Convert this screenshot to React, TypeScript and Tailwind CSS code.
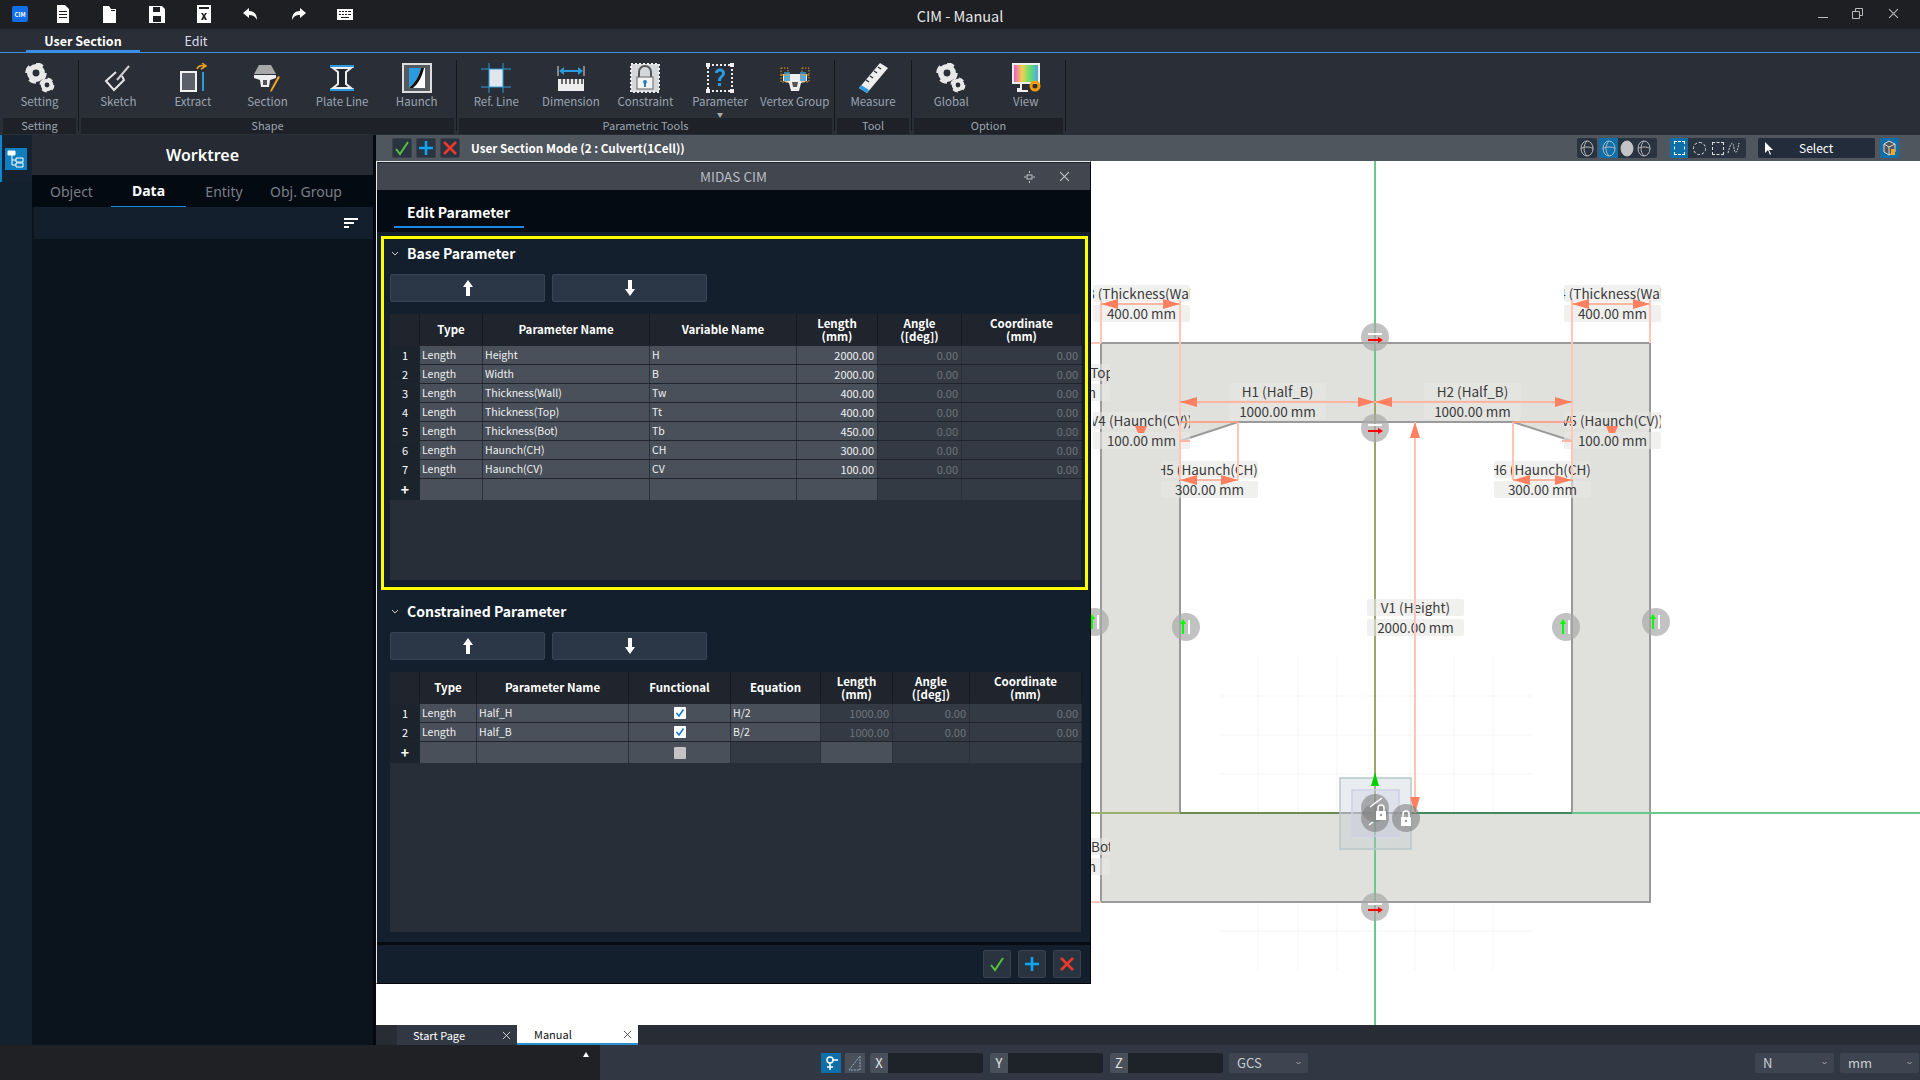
import type { ReactNode } from 'react';

const Gear = ({ cx, cy, r }: { cx: number; cy: number; r: number }) => (
  <g fill="none" stroke="#e8e8e8">
    <circle cx={cx} cy={cy} r={r * 0.62} strokeWidth={r * 0.55} />
    <circle cx={cx} cy={cy} r={r * 0.92} strokeWidth={r * 0.3} strokeDasharray={`${r * 0.72} ${r * 0.72}`} />
  </g>
);

const Svg = ({ children, s = 30 }: { children: ReactNode; s?: number }) => (
  <svg width={s} height={s} viewBox="0 0 30 30">
    {children}
  </svg>
);

const XMark = ({ s, c }: { s: number; c: string }) => (
  <svg width={s} height={s} viewBox="0 0 10 10" fill="none" stroke={c}>
    <path d="M1 1l8 8M9 1 1 9" />
  </svg>
);

const SettingIcon = () => (
  <Svg>
    <Gear cx={11} cy={10} r={10} />
    <Gear cx={22} cy={22} r={7} />
  </Svg>
);
const SketchIcon = () => (
  <Svg>
    <path d="M13 9 3 18l8 9 10-10-2-4" fill="none" stroke="#e8e8e8" strokeWidth="2" />
    <path d="M14 17 26 3" stroke="#d0d0d0" strokeWidth="2" />
  </Svg>
);
const ExtractIcon = () => (
  <Svg>
    <rect x="3" y="9" width="15" height="19" fill="#5b6068" stroke="#f2f2f2" strokeWidth="2" />
    <path d="M25 9v19" stroke="#2b9be0" strokeWidth="2" />
    <path d="M19 6c1-3 4-4 7-3M24 0l4 3-5 3" fill="none" stroke="#f5a623" strokeWidth="1.5" />
  </Svg>
);
const SectionIcon = () => (
  <Svg>
    <path d="M7 2h12l5 9H2z" fill="#a8a8a8" />
    <path d="M2 12h22v3l-6 2-1 7H9l-1-7-6-2z" fill="#eee" />
    <path d="M11 17h4v5h-4z" fill="#555" />
    <path d="m28 14-8 14-2 1 1-3 7-13z" fill="#f5a623" />
  </Svg>
);
const PlateIcon = () => (
  <Svg>
    <path d="M3 2h24v3H3zM3 25h24v3H3z" fill="#2b9be0" />
    <path d="M6 5h18l-5 4v12l5 4H6l5-4V9z" fill="#20252c" stroke="#eee" strokeWidth="2" />
  </Svg>
);
const HaunchIcon = () => (
  <Svg>
    <rect x="1" y="1" width="28" height="28" fill="#555a61" stroke="#ddd" strokeWidth="2" />
    <path d="M7 5h16v20H7z" fill="#fff" />
    <path d="M7 5h12C17 14 12 21 7 25z" fill="#2b9be0" />
    <path d="M19 5C17 14 12 21 7 25h4c5-4 9-11 11-20z" fill="#111" />
  </Svg>
);
const RefLineIcon = () => (
  <Svg>
    <path d="M8 6h14v18H8z" fill="#dfe7ea" />
    <path d="M8 0v30M22 0v30M0 6h30M0 24h30" stroke="#2b9be0" strokeWidth="1" />
  </Svg>
);
const DimensionIcon = () => (
  <Svg>
    <path d="M2 16h26v12H2z" fill="#eee" />
    <path d="M6 16v5M10 16v5M14 16v5M18 16v5M22 16v5M26 16v5" stroke="#222" strokeWidth="1.3" />
    <path d="M2 3v10M28 3v10" stroke="#ddd" />
    <path d="M4 8h22" stroke="#2b9be0" strokeWidth="2" />
    <path d="m3 8 5-4v8zM27 8l-5-4v8z" fill="#2b9be0" />
  </Svg>
);
const ConstraintIcon = () => (
  <Svg>
    <rect x="1" y="1" width="28" height="28" fill="#d5d8da" stroke="#eee" strokeDasharray="2 2" strokeWidth="2" />
    <path d="M9 14V9a6 6 0 0 1 12 0v5" fill="none" stroke="#555" strokeWidth="2" />
    <rect x="7" y="14" width="16" height="12" fill="#f3f3f3" stroke="#666" />
    <circle cx="15" cy="19" r="2" fill="#2b7fb5" />
    <path d="M14 19h2v5h-2z" fill="#2b7fb5" />
  </Svg>
);
const ParameterIcon = () => (
  <Svg>
    <rect x="3" y="2" width="24" height="26" fill="none" stroke="#eee" strokeWidth="2" strokeDasharray="2 2" />
    <path d="M1 0h4v4H1zM25 0h4v4h-4zM1 26h4v4H1zM25 26h4v4h-4z" fill="#eee" />
    <path d="M10 10c0-6 10-6 10 0 0 4-4 4-4 8h-3c0-5 4-5 4-8 0-2-4-2-4 0z" fill="#2b9be0" />
    <path d="M13 20h3v3h-3z" fill="#2b9be0" />
  </Svg>
);
const VertexIcon = () => (
  <Svg>
    <path d="M3 11h24v7l-6 2-2 8h-8l-2-8-6-2z" fill="#eee" />
    <path d="M12 19h6l-1 5h-4z" fill="#555" />
    <path d="M4 9h6v9H4zM20 9h6v9h-6z" fill="#2b9be0" opacity=".8" />
    <path d="M1 5h7v7H1zM22 5h7v7h-7zM1 12h7v7H1zM22 12h7v7h-7z" fill="none" stroke="#e89b20" strokeDasharray="1.5 1.5" />
  </Svg>
);
const MeasureIcon = () => (
  <Svg>
    <path d="M22 0 30 5 9 30 1 25z" fill="#eee" />
    <path d="M1 25 9 30 11 27 3 22z" fill="#2b9be0" />
    <path d="M8 17l3 2M12 13l3 2M16 8l3 2M20 4l3 2" stroke="#333" strokeWidth="1.5" />
  </Svg>
);
const ViewIcon = () => (
  <Svg>
    <defs>
      <linearGradient id="rb" x1="0" x2="1">
        <stop offset="0" stopColor="#f050d0" />
        <stop offset=".35" stopColor="#f0d050" />
        <stop offset=".65" stopColor="#60e070" />
        <stop offset="1" stopColor="#50a0f0" />
      </linearGradient>
    </defs>
    <rect x="2" y="1" width="26" height="19" fill="url(#rb)" stroke="#eee" strokeWidth="2" />
    <path d="M10 21v5H7v2h10" stroke="#eee" fill="none" strokeWidth="2" />
    <circle cx="24" cy="23" r="4" fill="none" stroke="#f59a00" strokeWidth="3" />
  </Svg>
);

const ribbon = [
  { label: 'Setting', w: 'w-[73px]', items: [['Setting', SettingIcon]] },
  {
    label: 'Shape',
    w: 'w-[373px]',
    items: [
      ['Sketch', SketchIcon],
      ['Extract', ExtractIcon],
      ['Section', SectionIcon],
      ['Plate Line', PlateIcon],
      ['Haunch', HaunchIcon],
    ],
  },
  {
    label: 'Parametric Tools',
    w: 'w-[373px]',
    items: [
      ['Ref. Line', RefLineIcon],
      ['Dimension', DimensionIcon],
      ['Constraint', ConstraintIcon],
      ['Parameter', ParameterIcon],
      ['Vertex Group', VertexIcon],
    ],
  },
  { label: 'Tool', w: 'w-[72px]', items: [['Measure', MeasureIcon]] },
  {
    label: 'Option',
    w: 'w-[149px]',
    items: [
      ['Global', SettingIcon],
      ['View', ViewIcon],
    ],
  },
] as { label: string; w: string; items: [string, () => ReactNode][] }[];

const TitleIcon = ({ d, cx }: { d: ReactNode; cx: string }) => (
  <div className={`absolute top-[5px] ${cx}`}>
    <svg width="18" height="18" viewBox="0 0 18 18" fill="#fff">
      {d}
    </svg>
  </div>
);

const TitleBar = () => (
  <div className="relative flex h-[29px] shrink-0 items-center justify-center bg-[#1d1f23] pt-[2px] text-[14.5px] text-[#e8e8e8]">
    <div className="absolute left-[12px] top-[6px] flex h-[16px] w-[16px] items-center justify-center rounded-[2px] bg-[#0f6ee8] text-[6px] font-bold text-white">
      CIM
    </div>
    <TitleIcon cx="left-[54px]" d={<path d="M3 0h8l4 4v14H3zM5 6v1h8V6zm0 3v1h8V9zm0 3v1h8v-1z" fillRule="evenodd" />} />
    <TitleIcon cx="left-[101px]" d={<path d="M2 1h6l2 3h5v14H2zM10 5v1h4V5z" fillRule="evenodd" />} />
    <TitleIcon cx="left-[148px]" d={<path d="M1 1h13l3 3v14H1zM5 2v5h7V2zm0 9v6h8v-6z" fillRule="evenodd" />} />
    <TitleIcon cx="left-[195px]" d={<path d="M2 0h14v18H2zM4 2v2h10V2zm2 6 2 3-2 4h2l1-2 1 2h2l-2-4 2-3h-2l-1 2-1-2z" fillRule="evenodd" />} />
    <TitleIcon cx="left-[242px]" d={<path d="M7 3 1 8l6 5v-3c4 0 6 1 8 5 0-6-3-9-8-9z" />} />
    <TitleIcon cx="left-[289px]" d={<path d="m11 3 6 5-6 5v-3c-4 0-6 1-8 5 0-6 3-9 8-9z" />} />
    <TitleIcon cx="left-[336px]" d={<path d="M1 4h16v11H1zm2 2v1h2V6zm3 0v1h2V6zm3 0v1h2V6zm3 0v1h3V6zM3 9v1h2V9zm3 0v1h2V9zm3 0v1h2V9zm3 0v1h3V9zm-7 3v1h8v-1z" fillRule="evenodd" />} />
    CIM - Manual
    <div className="absolute right-[92px] top-[17px] h-px w-[10px] bg-[#bbb]" />
    <svg className="absolute right-[57px] top-[8px]" width="11" height="11" viewBox="0 0 11 11" fill="none" stroke="#bbb">
      <path d="M.5 3.500h7v7h-7zM3.500 3.500v-3h7v7h-3" />
    </svg>
    <div className="absolute right-[21px] top-[8px]">
      <XMark s={11} c="#bbb" />
    </div>
  </div>
);

const Ribbon = () => (
  <>
    <div className="flex h-[24px] shrink-0 border-b border-[#3a8fe8] bg-[#2a2e37] text-[12.5px]">
      <div className="ml-[26px] flex w-[114px] items-center justify-center border-b-2 border-[#3a8fe8] pt-[4px] font-semibold text-white">
        User Section
      </div>
      <div className="ml-[28px] flex w-[56px] items-center justify-center pt-[2px] text-[#dde]">Edit</div>
    </div>
    <div className="flex h-[82px] shrink-0 bg-[#2a2e37] pl-[3px]">
      {ribbon.map((g) => (
        <div key={g.label} className="flex">
          <div className={`flex flex-col ${g.w}`}>
            <div className="flex h-[65px]">
              {g.items.map(([name, Icon]) => (
                <div key={name} className="relative flex flex-1 flex-col items-center pt-[10px]">
                  <Icon />
                  <span className="whitespace-nowrap text-[11.5px] leading-[16px] text-[#9ca5b1]">{name}</span>
                  {name === 'Parameter' && <span className="absolute bottom-0 text-[6px] leading-[6px] text-[#aaa]">▼</span>}
                </div>
              ))}
            </div>
            <div className="flex h-[16px] items-center justify-center bg-[#1e2127] pb-px text-[11px] text-[#9ca5b1]">
              {g.label}
            </div>
          </div>
          <div className="mx-[2px] mt-[7px] h-[71px] w-px bg-[#14171b]" />
        </div>
      ))}
    </div>
  </>
);

const SidePanel = () => (
  <div className="flex w-[376px] shrink-0 border-r-[3px] border-[#05080c] bg-[#0b131d] font-['Noto_Sans',sans-serif]">
    <div className="relative w-[32px] shrink-0 bg-[#13202e]">
      <div className="absolute left-0 top-0 flex h-[47px] w-[32px] items-center border-l-2 border-[#0f86d0] bg-[#16222f] pl-[3px]">
        <div className="flex h-[22px] w-[22px] items-center justify-center bg-[#0f7fc0]">
          <svg width="18" height="18" viewBox="0 0 18 18" fill="none" stroke="#fff">
            <path d="M1 1h7v4H1z" fill="#fff" />
            <path d="M5 5v10h4M5 10h4" />
            <path d="M9 8h7v4H9zM9 13h7v4H9z" />
          </svg>
        </div>
      </div>
    </div>
    <div className="flex flex-1 flex-col">
      <div className="flex h-[40px] items-center justify-center bg-[#252a33] text-[16px] font-semibold text-white">
        Worktree
      </div>
      <div className="flex h-[32px] bg-[#040a12] text-[14px] text-[#7a7f85]">
        <div className="flex w-[79px] items-center justify-center">Object</div>
        <div className="flex w-[75px] items-center justify-center border-b border-[#1a8ae0] font-bold text-white">Data</div>
        <div className="flex w-[76px] items-center justify-center">Entity</div>
        <div className="flex w-[88px] items-center justify-center whitespace-nowrap">Obj. Group</div>
      </div>
      <div className="ml-[2px] flex h-[32px] items-center justify-end bg-[#141f2d] pr-[15px]">
        <div className="flex flex-col gap-[2px]">
          <div className="h-[2px] w-[14px] bg-white" />
          <div className="h-[2px] w-[10px] bg-white" />
          <div className="h-[2px] w-[5px] bg-white" />
        </div>
      </div>
    </div>
  </div>
);

const Check = () => <path d="M3 10l4 5L15 3" fill="none" stroke="#56c23d" strokeWidth="2" />;
const Plus = () => <path d="M9 2v14M2 9h14" stroke="#0fa5f0" strokeWidth="2.6" />;
const Cross = () => <path d="M3 3l12 12M15 3 3 15" stroke="#e8392b" strokeWidth="2.6" />;

const ActionBtn = ({ children, cls }: { children: ReactNode; cls: string }) => (
  <div className={`flex items-center justify-center rounded-[2px] border border-[#39414d] bg-[#2a3340] ${cls}`}>
    <svg width="18" height="18" viewBox="0 0 18 18">
      {children}
    </svg>
  </div>
);

const Globe = ({ fill }: { fill?: boolean }) => (
  <svg width="14" height="17" viewBox="0 0 14 17" fill={fill ? '#c4c4c4' : 'none'} stroke={fill ? '#c4c4c4' : '#bbb'}>
    <ellipse cx="7" cy="8.500" rx="6" ry="7.500" />
    {!fill && <path d="M1 8.500c3-2 9-2 12 0M7 1C3 5 3 12 7 16" />}
  </svg>
);

const ViewToolbar = () => (
  <div className="flex h-[26px] shrink-0 items-center bg-[#50565e] pl-[16px]">
    <div className="flex gap-[4px]">
      <ActionBtn cls="h-[20px] w-[20px]"><Check /></ActionBtn>
      <ActionBtn cls="h-[20px] w-[20px]"><Plus /></ActionBtn>
      <ActionBtn cls="h-[20px] w-[20px]"><Cross /></ActionBtn>
    </div>
    <span className="ml-[11px] text-[11.700px] font-semibold text-white">User Section Mode (2 : Culvert(1Cell))</span>
    <div className="ml-auto flex h-[20px] items-center gap-[2px] pr-[21px]">
      <div className="flex h-[20px] w-[20px] items-center justify-center rounded-[2px] bg-[#2a3340]">
        <Globe />
      </div>
      <div className="flex h-[20px] w-[58px] items-center rounded-[2px] bg-[#2a3340]">
        <div className="flex h-[20px] w-[19px] items-center justify-center bg-[#0f6fa8]">
          <Globe />
        </div>
        <div className="ml-[2px] flex">
          <Globe fill />
        </div>
        <div className="ml-[3px] flex">
          <Globe />
        </div>
      </div>
      <div className="ml-[11px] flex h-[20px] w-[76px] items-center rounded-[2px] bg-[#2a3340]">
        <div className="flex h-[20px] w-[18px] items-center justify-center bg-[#0f6fa8]">
          <div className="h-[14px] w-[11px] border border-dashed border-white" />
        </div>
        <div className="ml-[5px] h-[13px] w-[13px] rounded-full border border-dashed border-[#ddd]" />
        <div className="ml-[6px] h-[13px] w-[12px] border border-dashed border-[#ddd]" />
        <svg className="ml-[3px]" width="14" height="14" viewBox="0 0 14 14">
          <path d="M1 12C4 0 6 0 7 7s3 6 5-5" fill="none" stroke="#ccc" strokeDasharray="2 1" />
        </svg>
      </div>
      <div className="ml-[10px] flex h-[20px] w-[117px] items-center rounded-[2px] bg-[#222c3a] pl-[6px] text-[12px] text-white">
        <svg width="9" height="13" viewBox="0 0 9 13">
          <path d="M1 0v11l3-3 2 5 1-1-2-4h4z" fill="#fff" />
        </svg>
        <span className="ml-[26px]">Select</span>
      </div>
      <div className="ml-[3px] flex h-[20px] w-[19px] items-center justify-center bg-[#0f6fa8]">
        <svg width="13" height="16" viewBox="0 0 13 16">
          <path d="M6 1 1 4v8l5 3 6-3V4zM1 4l5 3 6-3M6 7v8" fill="#555" stroke="#ddd" />
          <path d="M8 9h4v6H8z" fill="#f5a623" />
        </svg>
      </div>
    </div>
  </div>
);

type Dim = { cx: number; y: number; title: string; value: string };

const labels: Dim[] = [
  { cx: 1141, y: 285, title: 'H3 (Thickness(Wall))', value: '400.00 mm' },
  { cx: 1612, y: 285, title: 'H4 (Thickness(Wall))', value: '400.00 mm' },
  { cx: 1061, y: 364, title: 'V2 (Thickness(Top))', value: '400.00 mm' },
  { cx: 1277, y: 383, title: 'H1 (Half_B)', value: '1000.00 mm' },
  { cx: 1472, y: 383, title: 'H2 (Half_B)', value: '1000.00 mm' },
  { cx: 1141, y: 412, title: 'V4 (Haunch(CV))', value: '100.00 mm' },
  { cx: 1612, y: 412, title: 'V5 (Haunch(CV))', value: '100.00 mm' },
  { cx: 1209, y: 461, title: 'H5 (Haunch(CH))', value: '300.00 mm' },
  { cx: 1542, y: 461, title: 'H6 (Haunch(CH))', value: '300.00 mm' },
  { cx: 1415, y: 599, title: 'V1 (Height)', value: '2000.00 mm' },
  { cx: 1061, y: 838, title: 'V3 (Thickness(Bot))', value: '450.00 mm' },
];

const DimLabel = ({ d }: { d: Dim }) => (
  <div
    className="absolute flex w-[97px] flex-col gap-[3px] text-[13.500px] leading-[17px] text-[#3a3a3a]"
    style={{ left: d.cx - 48 - 376, top: d.y - 161 }}
  >
    <div className="flex h-[17px] justify-center overflow-hidden whitespace-nowrap rounded-[2px] bg-[#e6e6e4]/60">{d.title}</div>
    <div className="flex h-[17px] justify-center overflow-hidden whitespace-nowrap rounded-[2px] bg-[#e6e6e4]/60">{d.value}</div>
  </div>
);

const Handle = ({ x, y, vertical }: { x: number; y: number; vertical?: boolean }) => (
  <g>
    <circle cx={x} cy={y} r="14" fill="#a8a8a8" opacity=".7" />
    {vertical ? (
      <>
        <path d={`M${x + 3} ${y - 7}v14`} stroke="#fff" strokeWidth="2" />
        <path d={`M${x - 3} ${y + 7}v-12`} stroke="#0f0" strokeWidth="2" />
        <path d={`M${x - 3} ${y - 8}l3 5h-6z`} fill="#0f0" />
      </>
    ) : (
      <>
        <path d={`M${x - 7} ${y - 3}h14`} stroke="#fff" strokeWidth="2" />
        <path d={`M${x - 7} ${y + 3}h11`} stroke="#f00" strokeWidth="2" />
        <path d={`M${x + 8} ${y + 3}l-5 -3v6z`} fill="#f00" />
      </>
    )}
  </g>
);

const Lock = ({ x, y }: { x: number; y: number }) => (
  <g>
    <path d={`M${x - 3} ${y - 2}v-3a3 3 0 0 1 6 0v3`} fill="none" stroke="#fff" strokeWidth="1.5" />
    <rect x={x - 5} y={y - 2} width="10" height="9" fill="#fff" />
    <circle cx={x} cy={y + 2} r="1.2" fill="#999" />
  </g>
);

const PINK = '#ffc6b8';
const ORANGE = '#ff8060';

const HArrow = ({ a, b, y }: { a: number; b: number; y: number }) => (
  <g>
    <path d={`M${a} ${y}H${b}`} stroke="#ffb5a0" strokeWidth="2" />
    <path d={`M${a} ${y}l17 -5v10zM${b} ${y}l-17 -5v10z`} fill={ORANGE} />
  </g>
);

const SheetDrawing = () => {
  const gx = [1258, 1298, 1337, 1415, 1454, 1493];
  const gy = [696, 735, 774, 852, 892, 931];
  return (
    <svg className="absolute left-0 top-0" width="1544" height="864" viewBox="376 161 1544 864">
      {gx.map((x) => (
        <path key={x} d={`M${x} 657V970`} stroke="#f5f5f5" />
      ))}
      {gy.map((y) => (
        <path key={y} d={`M1219 ${y}H1533`} stroke="#f5f5f5" />
      ))}
      <path
        d="M1101 343H1650V902H1101ZM1180 441V813H1572V441L1513 422H1238Z"
        fill="#e0e1dc"
        fillRule="evenodd"
        stroke="#9a9a9a"
        strokeWidth="2"
      />
      <path d="M1375 161V400" stroke="#6cc88a" strokeWidth="2" />
      <path d="M1375 400V813" stroke="#9aa66a" strokeWidth="2" />
      <path d="M1375 813V1025" stroke="#6cc88a" strokeWidth="2" />
      <path d="M1091 813H1180" stroke="#9cb070" strokeWidth="2" />
      <path d="M1180 813H1340" stroke="#6a8a50" strokeWidth="2" />
      <path d="M1411 813H1572" stroke="#3f8a60" strokeWidth="2" />
      <path d="M1572 813H1920" stroke="#6cc88a" strokeWidth="2" />
      <rect x="1340" y="778" width="71" height="71" fill="#b8c4cc" fillOpacity=".3" stroke="#b5c8cc" strokeWidth="1.5" />
      <rect x="1352" y="790" width="47" height="46" fill="#c8c8e0" fillOpacity=".3" stroke="#cfcfe8" strokeWidth="1.5" />
    </svg>
  );
};

const DimDrawing = () => (
  <svg className="absolute left-0 top-0" width="1544" height="864" viewBox="376 161 1544 864">
    <g stroke={PINK} strokeWidth="2" fill="none">
      <path d="M1101 300V343M1180 300V441M1572 300V441M1650 300V343M1091 343H1101M1091 902H1101" />
      <path d="M1238 422V480M1513 422V480M1180 441V480M1572 441V480" />
      <path d="M1415 422V813" />
    </g>
    <path d="M1180 422H1238M1513 422H1572" stroke="#ff9a80" strokeWidth="2" opacity=".8" />
    <path d="M1180 441H1190M1562 441H1572" stroke="#ffb5a0" strokeWidth="2" />
    <HArrow a={1101} b={1180} y={304} />
    <HArrow a={1572} b={1650} y={304} />
    <HArrow a={1180} b={1375} y={402} />
    <HArrow a={1375} b={1572} y={402} />
    <HArrow a={1180} b={1238} y={480} />
    <HArrow a={1513} b={1572} y={480} />
    <path d="M1415 422l-5 16h10zM1415 813l-5 -16h10z" fill={ORANGE} />
    <path d="M1135 426h12l-3 7h-6zM1606 426h12l-3 7h-6z" fill={ORANGE} />
    <path d="M1375 772l-4 14h8z" fill="#00d000" />

    <Handle x={1375} y={337} />
    <Handle x={1375} y={428} />
    <Handle x={1375} y={907} />
    <Handle x={1186} y={627} vertical />
    <Handle x={1566} y={627} vertical />
    <Handle x={1656} y={622} vertical />
    <Handle x={1095} y={622} vertical />
    <circle cx="1375" cy="808" r="14" fill="#808080" opacity=".6" />
    <circle cx="1375" cy="818" r="14" fill="#808080" opacity=".6" />
    <path d="M1370 807 1382 798M1369 825 1373 822" stroke="#fff" strokeWidth="1.5" />
    <Lock x={1381} y={813} />
    <circle cx="1406" cy="818" r="14" fill="#808080" opacity=".6" />
    <Lock x={1406} y={819} />
  </svg>
);

const UpArrow = () => (
  <svg width="12" height="16" viewBox="0 0 12 16" fill="#fff">
    <path d="M6 0l5 7H8v9H4V7H1z" />
  </svg>
);
const DownArrow = () => (
  <svg width="12" height="16" viewBox="0 0 12 16" fill="#fff">
    <path d="M6 16l5-7H8V0H4v9H1z" />
  </svg>
);

type Col = { title: string[]; align?: 'right' | 'center'; tone?: 'edit' | 'off' };
type Cell = string | boolean | null;

const ParamTable = ({ template, h, cols, rows, lastCellTones }: {
  template: string;
  h: string;
  cols: Col[];
  rows: Cell[][];
  lastCellTones?: ('edit' | 'off')[];
}) => (
  <div className={`flex flex-col bg-[#282e37] ${h}`}>
    <div className={`grid h-[31px] bg-[#20252d] ${template}`}>
      <div className="border-r border-[#151a21]" />
      {cols.map((c) => (
        <div
          key={c.title.join()}
          className="flex flex-col items-center justify-center border-r border-[#151a21] text-[11.500px] font-semibold leading-[13px] text-white"
        >
          {c.title.map((t) => (
            <span key={t}>{t}</span>
          ))}
        </div>
      ))}
    </div>
    {rows.map((r, i) => (
      <div key={i} className={`grid h-[19px] border-t border-[#20252d] leading-[18px] ${template}`}>
        <div className="bg-[#1b232d] text-center text-[11px] text-white">{i + 1}</div>
        {r.map((cell, j) => {
          const c = cols[j];
          return (
            <div
              key={j}
              className={`overflow-hidden border-r border-[#2a3039] px-[2px] ${
                c.tone === 'off' ? 'bg-[#343a43] text-[#6f747b]' : 'bg-[#4a505a] text-[#eef0f2]'
              } ${c.align === 'right' ? 'pr-[3px] text-right text-[11px]' : 'text-[10.500px]'}`}
            >
              {typeof cell === 'boolean' ? (
                <div className="mx-auto flex h-[18px] w-[13px] items-center justify-center">
                  <div className="flex h-[12px] w-[12px] items-center justify-center rounded-[1px] bg-white">
                    <svg width="10" height="10" viewBox="0 0 10 10">
                      <path d="M1.5 5 4 8l4.5-6.5" fill="none" stroke="#1478d4" strokeWidth="1.6" />
                    </svg>
                  </div>
                </div>
              ) : (
                cell
              )}
            </div>
          );
        })}
      </div>
    ))}
    <div className={`grid h-[18px] border-t border-[#20252d] text-[11px] ${template}`}>
      <div className="flex items-center justify-center bg-[#1b232d] text-[14px] font-bold text-white">+</div>
      {cols.map((c, j) => {
        const tone = lastCellTones ? lastCellTones[j] : c.tone;
        return (
          <div
            key={j}
            className={`flex items-center justify-center border-r border-[#2a3039] ${tone === 'off' ? 'bg-[#343a43]' : 'bg-[#4a505a]'}`}
          >
            {c.title[0] === 'Functional' && <div className="h-[12px] w-[12px] rounded-[1px] bg-[#c4c4c4]" />}
          </div>
        );
      })}
    </div>
  </div>
);

const Section = ({ title, cls, children }: { title: string; cls: string; children: ReactNode }) => (
  <div className={`flex flex-col pl-[13px] pr-[9px] ${cls}`}>
    <div className="flex h-[20px] items-center gap-[8px] pb-[1px] pl-[1px] text-[14px] font-semibold text-white">
      <svg width="8" height="6" viewBox="0 0 8 6">
        <path d="M1 1l3 3 3-3" fill="none" stroke="#ccc" />
      </svg>
      {title}
    </div>
    <div className="mt-[10px] flex gap-[7px]">
      <div className="flex h-[28px] w-[155px] items-center justify-center rounded-[2px] border border-[#3a4553] bg-[#2b3646]">
        <UpArrow />
      </div>
      <div className="flex h-[28px] w-[155px] items-center justify-center rounded-[2px] border border-[#3a4553] bg-[#2b3646]">
        <DownArrow />
      </div>
    </div>
    <div className="mt-[12px]">{children}</div>
  </div>
);

const baseCols: Col[] = [
  { title: ['Type'] },
  { title: ['Parameter Name'] },
  { title: ['Variable Name'] },
  { title: ['Length', '(mm)'], align: 'right' },
  { title: ['Angle', '([deg])'], align: 'right', tone: 'off' },
  { title: ['Coordinate', '(mm)'], align: 'right', tone: 'off' },
];
const baseRows: Cell[][] = [
  ['Length', 'Height', 'H', '2000.00', '0.00', '0.00'],
  ['Length', 'Width', 'B', '2000.00', '0.00', '0.00'],
  ['Length', 'Thickness(Wall)', 'Tw', '400.00', '0.00', '0.00'],
  ['Length', 'Thickness(Top)', 'Tt', '400.00', '0.00', '0.00'],
  ['Length', 'Thickness(Bot)', 'Tb', '450.00', '0.00', '0.00'],
  ['Length', 'Haunch(CH)', 'CH', '300.00', '0.00', '0.00'],
  ['Length', 'Haunch(CV)', 'CV', '100.00', '0.00', '0.00'],
];
const conCols: Col[] = [
  { title: ['Type'] },
  { title: ['Parameter Name'] },
  { title: ['Functional'] },
  { title: ['Equation'] },
  { title: ['Length', '(mm)'], align: 'right', tone: 'off' },
  { title: ['Angle', '([deg])'], align: 'right', tone: 'off' },
  { title: ['Coordinate', '(mm)'], align: 'right', tone: 'off' },
];
const conRows: Cell[][] = [
  ['Length', 'Half_H', true, 'H/2', '1000.00', '0.00', '0.00'],
  ['Length', 'Half_B', true, 'B/2', '1000.00', '0.00', '0.00'],
];

const EditDialog = () => (
  <div className="absolute left-0 top-0 flex h-[823px] w-[715px] flex-col border-b border-l border-r border-t border-b-[#05080c] border-l-[#e6e8ea] border-r-[#05080c] border-t-[#e6e8ea] bg-[#141f2d]">
    <div className="relative flex h-[28px] shrink-0 items-center justify-center border-t border-[#20242a] bg-[#42464f] text-[13.500px] text-[#b9bec5]">
      MIDAS CIM
      <svg className="absolute right-[55px] top-[8px]" width="11" height="12" viewBox="0 0 11 12" fill="none" stroke="#c4c8cc">
        <rect x="3" y="4" width="5" height="4" />
        <path d="M5.500 0v2M5.500 10v2M0 6h2M9 6h2" />
      </svg>
      <span className="absolute right-[20px] top-[8px]">
        <XMark s={11} c="#c4c8cc" />
      </span>
    </div>
    <div className="flex h-[42px] shrink-0 bg-[#040b13] pl-[17px]">
      <div className="mb-[4px] flex w-[130px] items-center border-b-2 border-[#1a8ae0] pl-[13px] pt-[8px] text-[14px] font-semibold text-white">
        Edit Parameter
      </div>
    </div>
    <Section title="Base Parameter" cls="pt-[12px]">
      <ParamTable
        template="grid-cols-[30px_63px_167px_147px_81px_84px_120px]"
        h="h-[266px]"
        cols={baseCols}
        rows={baseRows}
      />
    </Section>
    <Section title="Constrained Parameter" cls="mt-[22px]">
      <ParamTable
        template="grid-cols-[30px_57px_152px_102px_90px_72px_77px_112px]"
        h="h-[260px]"
        cols={conCols}
        rows={conRows}
        lastCellTones={['edit', 'edit', 'edit', 'off', 'edit', 'off', 'off']}
      />
    </Section>
    <div className="mt-[10px] flex h-[41px] shrink-0 items-center justify-end gap-[7px] border-t-[3px] border-[#060b12] pr-[9px]">
      <ActionBtn cls="h-[28px] w-[28px]"><Check /></ActionBtn>
      <ActionBtn cls="h-[28px] w-[28px]"><Plus /></ActionBtn>
      <ActionBtn cls="h-[28px] w-[28px]"><Cross /></ActionBtn>
    </div>
    <div className="absolute left-[4px] top-[74px] h-[354px] w-[707px] border-[3px] border-[#ffff00]" />
  </div>
);

const DocTabs = () => (
  <div className="flex h-[20px] shrink-0 bg-[#282d35] pl-[21px] text-[11px]">
    <div className="flex w-[120px] items-center justify-between bg-[#323843] pl-[16px] pr-[6px] text-white">
      Start Page <XMark s={9} c="#ddd" />
    </div>
    <div className="flex w-[121px] items-center justify-between border-b-2 border-[#2b90d0] bg-white pl-[17px] pr-[6px] text-[#111]">
      Manual <XMark s={9} c="#444" />
    </div>
  </div>
);

const Coord = ({ name }: { name: string }) => (
  <div className="flex h-[20px] w-[113px] overflow-hidden rounded-[2px] bg-[#1e232a]">
    <div className="flex w-[18px] items-center justify-center bg-[#4a505a] text-[13px] text-[#e4e6e8]">{name}</div>
  </div>
);

const Select = ({ value }: { value: string }) => (
  <div className="flex h-[20px] w-[79px] items-center justify-between rounded-[2px] bg-[#3f4550] pl-[8px] pr-[7px] text-[13px] text-[#c9ced4]">
    {value}
    <svg width="5" height="4" viewBox="0 0 5 4">
      <path d="M.5 1l2 2 2-2" fill="none" stroke="#aaa" />
    </svg>
  </div>
);

const StatusBar = () => (
  <div className="flex h-[35px] shrink-0">
    <div className="relative w-[600px] bg-[#1f2125]">
      <div className="absolute right-[11px] top-[7px] h-0 w-0 border-b-[5px] border-l-[3px] border-r-[3px] border-b-white border-l-transparent border-r-transparent" />
    </div>
    <div className="flex flex-1 items-center bg-[#323843] pl-[221px] pr-px">
      <div className="flex h-[20px] w-[20px] items-center justify-center bg-[#0f6fa8]">
        <svg width="14" height="16" viewBox="0 0 14 16" fill="none" stroke="#fff" strokeWidth="1.5">
          <circle cx="6" cy="5" r="3" />
          <path d="M6 8v7M3 12h6M9 5h5" />
        </svg>
      </div>
      <div className="ml-[4px] flex h-[20px] w-[20px] items-center justify-center bg-[#4a505a]">
        <svg width="14" height="16" viewBox="0 0 14 16" fill="none" stroke="#8fb0d0">
          <path d="M1 15 12 1v14z" strokeDasharray="2 1" />
        </svg>
      </div>
      <div className="ml-[5px] flex gap-[7px]">
        <Coord name="X" />
        <Coord name="Y" />
        <Coord name="Z" />
      </div>
      <div className="ml-[6px]">
        <Select value="GCS" />
      </div>
      <div className="ml-auto flex gap-[6px]">
        <Select value="N" />
        <Select value="mm" />
      </div>
    </div>
  </div>
);

export default function App() {
  return (
    <div className="flex h-[1080px] w-[1920px] flex-col overflow-hidden bg-[#0b131d] font-['Noto_Sans_CJK_KR','Noto_Sans',sans-serif]">
      <TitleBar />
      <Ribbon />
      <div className="flex min-h-0 flex-1">
        <SidePanel />
        <div className="flex min-w-0 flex-1 flex-col">
          <ViewToolbar />
          <div className="relative min-h-0 flex-1 overflow-hidden bg-white">
            <SheetDrawing />
            {labels.map((d) => (
              <DimLabel key={d.title} d={d} />
            ))}
            <DimDrawing />
            <EditDialog />
          </div>
          <DocTabs />
        </div>
      </div>
      <StatusBar />
    </div>
  );
}
